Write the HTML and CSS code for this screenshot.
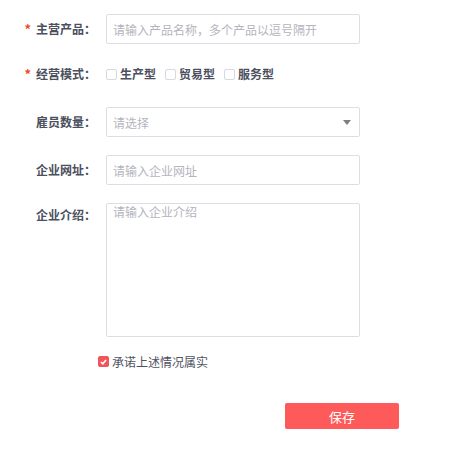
FILE: index.html
```html
<!DOCTYPE html>
<html lang="zh-CN">
<head>
  <meta charset="UTF-8" />
  <meta name="viewport" content="width=device-width, initial-scale=1.0"/>
  <title>企业信息</title>
  <link rel="stylesheet" href="styles.css">
</head>
<body>
  <form class="info-form">
    <div class="row">
      <label class="row-label"><span class="req">*</span>主营产品：</label>
      <input class="field" type="text" placeholder="请输入产品名称，多个产品以逗号隔开">
    </div>

    <div class="row row-check">
      <label class="row-label"><span class="req">*</span>经营模式：</label>
      <div class="options">
        <label class="opt"><span class="box"></span>生产型</label>
        <label class="opt"><span class="box"></span>贸易型</label>
        <label class="opt"><span class="box"></span>服务型</label>
      </div>
    </div>

    <div class="row">
      <label class="row-label">雇员数量：</label>
      <div class="field select">
        <span class="ph">请选择</span>
        <span class="arrow"></span>
      </div>
    </div>

    <div class="row">
      <label class="row-label">企业网址：</label>
      <input class="field" type="text" placeholder="请输入企业网址">
    </div>

    <div class="row row-top">
      <label class="row-label">企业介绍：</label>
      <textarea class="field area" placeholder="请输入企业介绍"></textarea>
    </div>

    <div class="agree">
      <span class="box checked">
        <svg width="7" height="6" viewBox="0 0 7 6"><path d="M1 3 L2.8 4.8 L6 1" fill="none" stroke="#fff" stroke-width="1.6"/></svg>
      </span>
      承诺上述情况属实
    </div>

    <div class="actions">
      <button type="button" class="btn-save">保存</button>
    </div>
  </form>
</body>
</html>
```

FILE: styles.css
```css
body {
  margin: 0;
  background: #fff;
  font-family: "Noto Sans CJK SC", "Liberation Sans", sans-serif;
  font-size: 12px;
  color: #4b4f5e;
}
.info-form {
  padding-top: 14px;
}
.row {
  display: flex;
  align-items: center;
  margin-bottom: 18px;
}
.row-label {
  width: 96px;
  flex: none;
  text-align: right;
  font-weight: bold;
  margin-right: 10px;
  line-height: 16px;
}
.req {
  color: #ee4a1f;
  font-size: 13px;
  margin-right: 5px;
}
.field {
  box-sizing: border-box;
  width: 254px;
  height: 30px;
  border: 1px solid #dddde6;
  border-radius: 2px;
  padding: 0 6px;
  font-family: inherit;
  font-size: 12px;
  color: #4b4f5e;
  background: #fff;
  outline: none;
}
.field::placeholder,
.ph {
  color: #b4b4bd;
}
.select {
  display: flex;
  align-items: center;
  justify-content: space-between;
  padding-right: 8px;
}
.arrow {
  width: 0;
  height: 0;
  border-left: 4px solid transparent;
  border-right: 4px solid transparent;
  border-top: 5px solid #7d7d84;
}
.row-check {
  height: 27px;
  align-items: flex-start;
}
.row-check .row-label {
  line-height: 24px;
}
.options {
  display: flex;
  gap: 9px;
  line-height: 24px;
}
.opt {
  display: flex;
  align-items: center;
  font-weight: bold;
}
.box {
  box-sizing: border-box;
  width: 11px;
  height: 11px;
  border: 1px solid #d8d8e0;
  border-radius: 2px;
  margin-right: 3px;
  display: inline-flex;
  align-items: center;
  justify-content: center;
}
.row-top {
  align-items: flex-start;
}
.row-top .row-label {
  padding-top: 4px;
}
.area {
  height: 134px;
  padding: 0 6px;
  resize: none;
  line-height: 16px;
}
.agree {
  display: flex;
  align-items: center;
  margin-left: 98px;
  margin-top: -2px;
  color: #4f5261;
}
.box.checked {
  background: #f2545b;
  border-color: #f2545b;
}
.actions {
  padding-left: 285px;
  margin-top: 33px;
}
.btn-save {
  width: 114px;
  height: 26px;
  border: none;
  border-radius: 2px;
  background: #ff5a5a;
  color: #fff;
  font-family: inherit;
  font-size: 13px;
}
```
